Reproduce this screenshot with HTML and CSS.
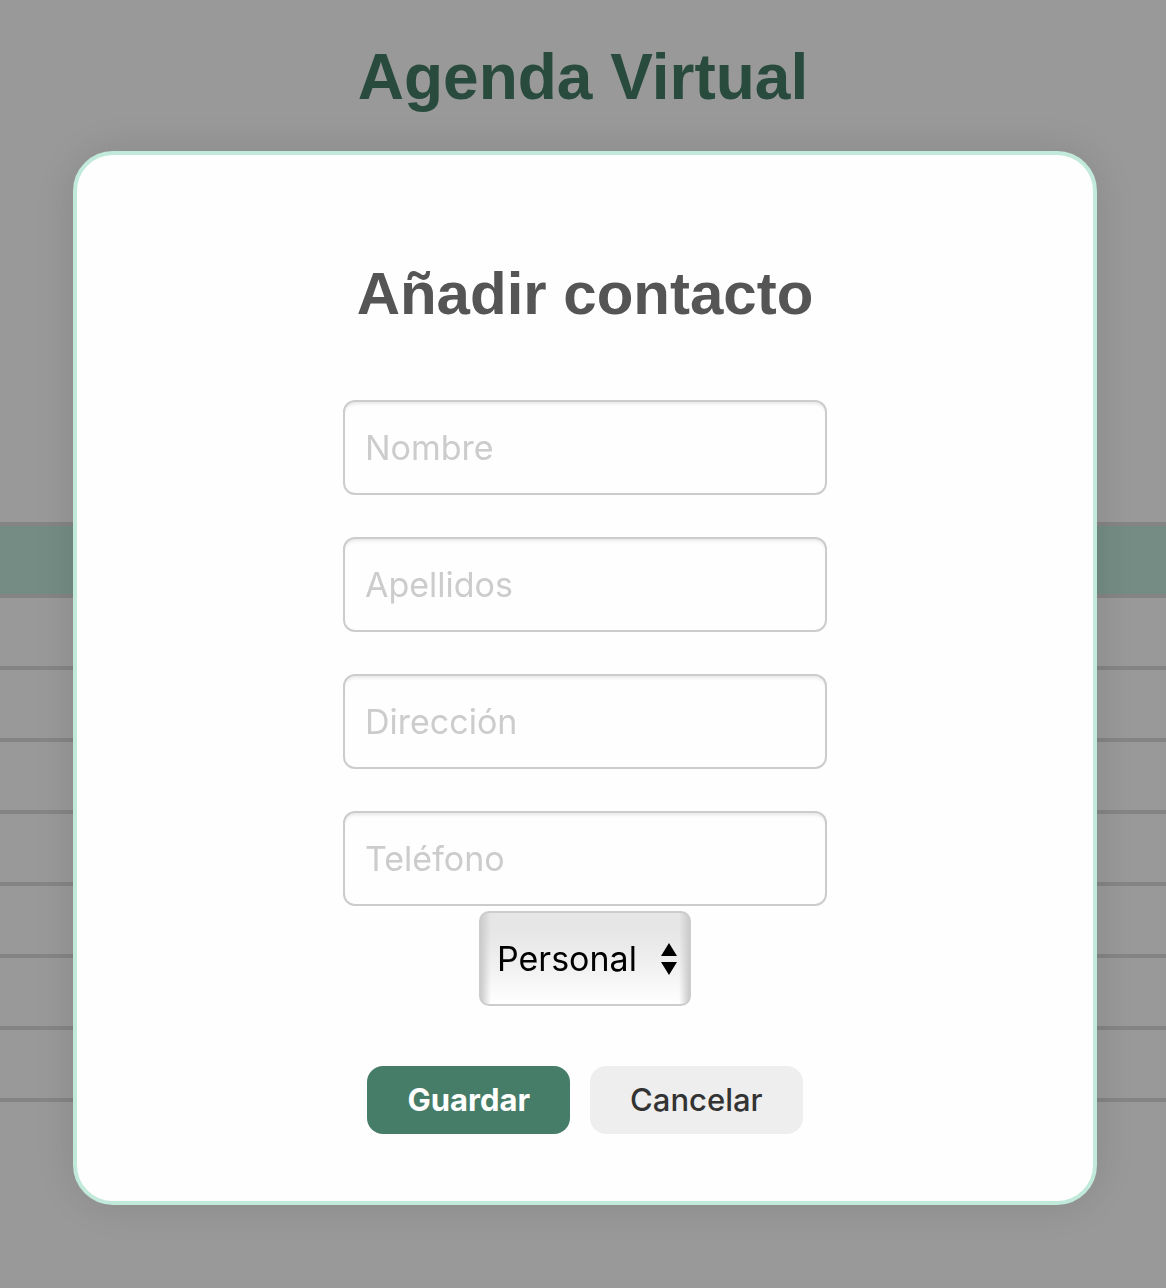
FILE: index.html
```html
<!DOCTYPE html>
<html lang="es">
<head>
  <meta charset="utf-8">
  <meta name="viewport" content="width=device-width, initial-scale=1">
  <title>Agenda Virtual</title>
  <link rel="stylesheet" href="styles.css">
</head>
<body>
  <main class="page">
    <h1 class="page-title">Agenda Virtual</h1>
    <table class="contacts">
      <thead><tr><th></th></tr></thead>
      <tbody>
        <tr><td></td></tr>
        <tr><td></td></tr>
        <tr><td></td></tr>
        <tr><td></td></tr>
        <tr><td></td></tr>
        <tr><td></td></tr>
        <tr><td></td></tr>
      </tbody>
    </table>
  </main>

  <div class="overlay">
    <form class="dialog" role="dialog" aria-labelledby="dialog-title">
      <h2 class="dialog-title" id="dialog-title">Añadir contacto</h2>
      <div class="fields">
        <input class="field" type="text" placeholder="Nombre" aria-label="Nombre">
        <input class="field" type="text" placeholder="Apellidos" aria-label="Apellidos">
        <input class="field" type="text" placeholder="Dirección" aria-label="Dirección">
        <input class="field" type="tel" placeholder="Teléfono" aria-label="Teléfono">
      </div>
      <div class="picker">
        <select class="select" aria-label="Tipo de contacto">
          <option>Personal</option>
        </select>
        <svg class="picker-arrows" viewBox="0 0 16 32" aria-hidden="true">
          <path d="M8 0 16 13H0ZM0 19H16L8 32Z"/>
        </svg>
      </div>
      <div class="actions">
        <button class="button button-primary" type="submit">Guardar</button>
        <button class="button" type="button">Cancelar</button>
      </div>
    </form>
  </div>
</body>
</html>
```
FILE: styles.css
```css
* {
  box-sizing: border-box;
}

body {
  margin: 0;
  background: #fff;
  font-family: "Liberation Sans", Arial, sans-serif;
}

.page {
  padding-top: 41px;
}

.page-title {
  margin: 0 0 409px;
  color: #437d68;
  font-size: 64px;
  line-height: 72px;
  text-align: center;
}

.contacts {
  width: 100%;
  border-spacing: 0;
  border-top: 4px solid #ddd;
}

.contacts th,
.contacts td {
  height: 72px;
  padding: 0;
  border-bottom: 4px solid #ddd;
}

.contacts th {
  background: #c1eadb;
  background-clip: padding-box;
}

.overlay {
  position: fixed;
  inset: 0;
  padding: 151px 69px 40px 73px;
  overflow: auto;
  background: rgba(0, 0, 0, 0.4);
}

.dialog {
  display: flex;
  flex-direction: column;
  align-items: center;
  padding: 105px 40px 67px;
  border: 4px solid #c1eadb;
  border-radius: 40px;
  background: #fefefe;
  box-shadow: 0 0 48px rgba(0, 0, 0, 0.12);
}

.dialog-title {
  margin: 0 0 72px;
  color: #555;
  font-size: 60px;
  line-height: 68px;
  text-align: center;
}

.fields {
  display: grid;
  gap: 42px;
  width: 100%;
  max-width: 484px;
}

.field {
  width: 100%;
  height: 95px;
  padding: 0 20px;
  border: 2px solid #ccc;
  border-radius: 12px;
  background: #fefefe;
  box-shadow: inset 0 4px 4px -3px #ddd;
  color: #000;
  font: 34px/44px Inter, sans-serif;
}

.field::placeholder {
  color: #ccc;
  opacity: 1;
}

.picker {
  display: grid;
  align-items: center;
  width: 212px;
  margin-top: 5px;
}

.select,
.picker-arrows {
  grid-area: 1 / 1;
}

.select {
  width: 100%;
  height: 95px;
  padding: 0 16px;
  border: 2px solid #ccc;
  border-radius: 10px;
  appearance: none;
  background:
    linear-gradient(to right, #ccc, transparent 10px, transparent calc(100% - 10px), #ccc),
    linear-gradient(#e6e6e6 20%, #f1f1f1 60%, #fff);
  color: #000;
  font: 34px/44px Inter, sans-serif;
}

.picker-arrows {
  justify-self: end;
  width: 16px;
  height: 32px;
  margin-right: 14px;
  pointer-events: none;
}

.actions {
  display: flex;
  gap: 20px;
  margin-top: 60px;
}

.button {
  height: 68px;
  padding: 0 40px;
  border: 0;
  border-radius: 16px;
  background: #eee;
  color: #333;
  font: 500 31px/40px Inter, sans-serif;
}

.button-primary {
  background: #467d68;
  color: #fff;
  font-weight: 700;
}
```
